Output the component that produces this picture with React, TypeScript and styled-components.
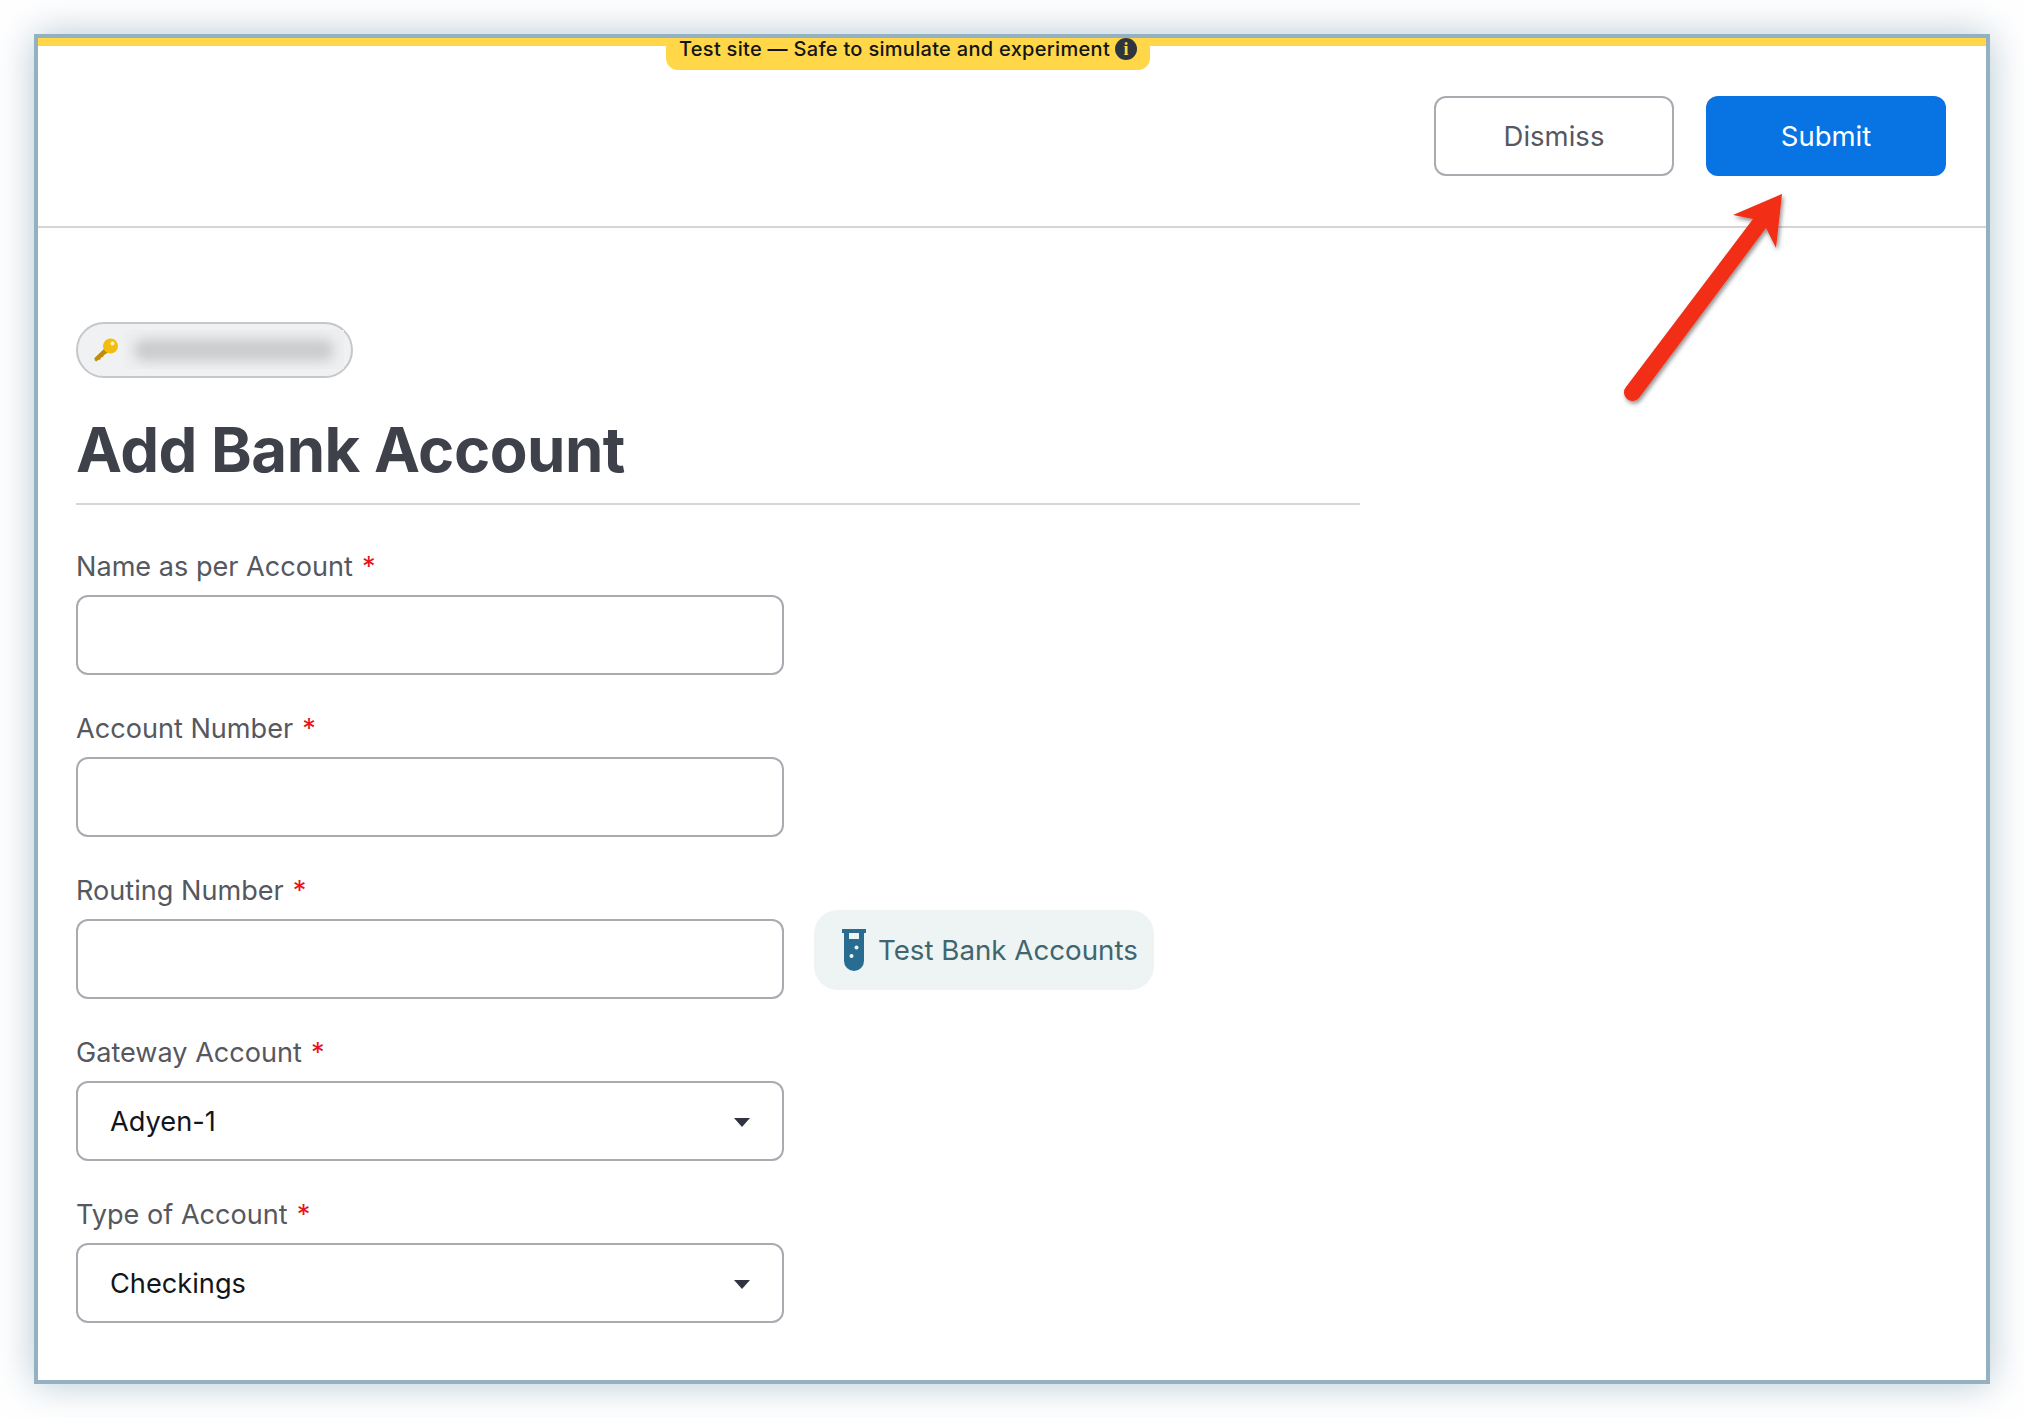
import { FC } from "react";
import styled, { createGlobalStyle } from "styled-components";

const FONT = `Inter, "Liberation Sans", sans-serif`;

const GlobalStyle = createGlobalStyle`
html, body {
    margin: 0;
    padding: 0;
    background: #ffffff;
}
* {
    box-sizing: border-box;
}
`

const Page = styled.div`
width: 2024px;
height: 1418px;
padding: 34px;
overflow: hidden;
font-family: ${FONT};
`

const Frame = styled.div`
position: relative;
width: 1956px;
height: 1350px;
background: #ffffff;
border: 4px solid #94b1c1;
box-shadow: 0 0 36px rgba(120, 155, 175, 0.55);
`

const TestStrip = styled.div`
height: 8px;
background: #ffd748;
`

const TestBanner = styled.div`
position: absolute;
top: 0;
left: 628px;
width: 484px;
height: 32px;
display: flex;
align-items: flex-start;
justify-content: center;
gap: 5px;
background: #ffd748;
border-radius: 0 0 12px 12px;
color: #12151a;
font-size: 20px;
line-height: 22px;
font-weight: 500;
letter-spacing: 0.3px;
white-space: nowrap;
`

const InfoDot = styled.span`
flex: none;
width: 22px;
height: 22px;
border-radius: 50%;
background: #2f343f;
color: #ffd748;
display: flex;
align-items: center;
justify-content: center;
font-family: "Liberation Serif", serif;
font-size: 18px;
font-weight: 700;
letter-spacing: 0;
`

const Header = styled.header`
height: 182px;
display: flex;
justify-content: flex-end;
gap: 32px;
padding: 49.5px 40px 0 0;
border-bottom: 2px solid #d4d6d8;
`

const HeaderButton = styled.button<{ $primary?: boolean }>`
width: 240px;
height: 80px;
border-radius: 12px;
border: ${(p) => (p.$primary ? "none" : "2px solid #a9abb1")};
background: ${(p) => (p.$primary ? "#0873e3" : "#ffffff")};
color: ${(p) => (p.$primary ? "#ffffff" : "#55585f")};
font-family: ${FONT};
font-size: 27.5px;
font-weight: 400;
`

const Content = styled.main`
padding: 93.5px 0 0 38px;
`

const ProductPill = styled.div`
width: 277px;
height: 56px;
display: flex;
align-items: center;
padding-left: 16px;
gap: 6px;
background: #f0f1f3;
border: 2px solid #c5c7cc;
border-radius: 28px;
`

const BlurBox = styled.div`
width: 220px;
height: 39px;
display: flex;
align-items: center;
justify-content: center;
overflow: hidden;
background: #eeeff1;
`

const BlurredText = styled.div`
width: 200px;
height: 22px;
border-radius: 11px;
background: #c9cbcd;
filter: blur(6px);
`

const Title = styled.h1`
width: 1284px;
margin: 34px 0 0;
padding-bottom: 15px;
border-bottom: 2px solid #d4d6d8;
color: #3e4149;
font-size: 61.7px;
line-height: 76px;
font-weight: 700;
letter-spacing: -0.5px;
`

const Form = styled.form`
padding-top: 44.5px;
display: flex;
flex-direction: column;
gap: 36px;
`

const FieldRow = styled.div`
display: flex;
align-items: flex-end;
gap: 30px;
`

const Field = styled.div`
width: 708px;
display: flex;
flex-direction: column;
gap: 10px;
`

const Label = styled.label`
color: #55585f;
font-size: 27.1px;
line-height: 36px;
`

const Required = styled.span`
color: #e5141e;
margin-left: 9px;
`

const TextInput = styled.input`
width: 708px;
height: 80px;
background: #ffffff;
border: 2px solid #a9abb1;
border-radius: 12px;
padding: 0 32px;
font-family: ${FONT};
font-size: 27px;
`

const SelectWrap = styled.div`
position: relative;
width: 708px;
height: 80px;

&::after {
    content: "";
    position: absolute;
    top: 37px;
    right: 34px;
    border-left: 8.5px solid transparent;
    border-right: 8.5px solid transparent;
    border-top: 9px solid #2f343f;
}
`

const Select = styled.select`
appearance: none;
width: 100%;
height: 100%;
background: #ffffff;
border: 2px solid #a9abb1;
border-radius: 12px;
padding: 0 32px;
color: #12151a;
font-family: ${FONT};
font-size: 27.2px;
`

const TestAccountsButton = styled.button`
width: 340px;
height: 80px;
margin-bottom: 9px;
display: flex;
align-items: center;
gap: 12px;
padding: 0 0 0 28px;
background: #eef4f4;
border: none;
border-radius: 24px;
color: #3f666e;
font-family: ${FONT};
font-size: 27.7px;
white-space: nowrap;
`

const ArrowOverlay = styled.svg`
position: absolute;
left: 1560px;
top: 140px;
overflow: visible;
`

const KeyIcon: FC = () => (
    <svg width="24" height="24" viewBox="0 0 24 24" style={{ flex: "none" }}>
        <path d="M11 10 L0.5 20 Q0 22 2 23.5 L5 21.5 L6 22 L7 19.5 L9 19 L10 17 L15 14 Z" fill="#c08a0c" />
        <circle cx="16.5" cy="8" r="7.5" fill="#f2bd0f" />
        <circle cx="18.5" cy="5.5" r="2" fill="#fff4c8" />
    </svg>
);

const TubeIcon: FC = () => (
    <svg width="24" height="42" viewBox="0 0 24 42" style={{ flex: "none" }}>
        <path d="M0 0 H24 V4 H22 V32 A10 10 0 0 1 2 32 V4 H0 Z" fill="#286c92" />
        <rect x="7" y="4" width="10" height="6" fill="#eef4f4" />
        <circle cx="14.5" cy="18.5" r="2" fill="#eef4f4" />
        <circle cx="9.5" cy="27" r="2" fill="#eef4f4" />
    </svg>
);

// annotation drawn over the page, origin is the overlay's own corner
const RedArrow: FC = () => (
    <ArrowOverlay width="240" height="240" viewBox="0 0 240 240">
        <defs>
            <filter id="arrowShadow" x="-20%" y="-20%" width="150%" height="150%">
                <feDropShadow dx="1.5" dy="2.5" stdDeviation="2" floodColor="#000000" floodOpacity="0.45" />
            </filter>
        </defs>
        <path
            d="M184 16 L135 37 L155 41 L28 209 A8 8 0 0 0 41 220 L168 50 L178 70 Z"
            fill="#f22d19"
            filter="url(#arrowShadow)"
        />
    </ArrowOverlay>
);

const App: FC = () => {
    return (
    <Page>
        <GlobalStyle />
        <Frame>
            <TestStrip />
            <TestBanner>
                Test site — Safe to simulate and experiment
                <InfoDot>i</InfoDot>
            </TestBanner>
            <Header>
                <HeaderButton type="button">Dismiss</HeaderButton>
                <HeaderButton type="button" $primary>Submit</HeaderButton>
            </Header>
            <Content>
                <ProductPill>
                    <KeyIcon />
                    <BlurBox>
                        <BlurredText />
                    </BlurBox>
                </ProductPill>
                <Title>Add Bank Account</Title>
                <Form>
                    <Field>
                        <Label>Name as per Account<Required>*</Required></Label>
                        <TextInput />
                    </Field>
                    <Field>
                        <Label>Account Number<Required>*</Required></Label>
                        <TextInput />
                    </Field>
                    <FieldRow>
                        <Field>
                            <Label>Routing Number<Required>*</Required></Label>
                            <TextInput />
                        </Field>
                        <TestAccountsButton type="button">
                            <TubeIcon />
                            Test Bank Accounts
                        </TestAccountsButton>
                    </FieldRow>
                    <Field>
                        <Label>Gateway Account<Required>*</Required></Label>
                        <SelectWrap>
                            <Select defaultValue="Adyen-1">
                                <option>Adyen-1</option>
                            </Select>
                        </SelectWrap>
                    </Field>
                    <Field>
                        <Label>Type of Account<Required>*</Required></Label>
                        <SelectWrap>
                            <Select defaultValue="Checkings">
                                <option>Checkings</option>
                                <option>Savings</option>
                            </Select>
                        </SelectWrap>
                    </Field>
                </Form>
            </Content>
            <RedArrow />
        </Frame>
    </Page>
    )
}

export default App;
